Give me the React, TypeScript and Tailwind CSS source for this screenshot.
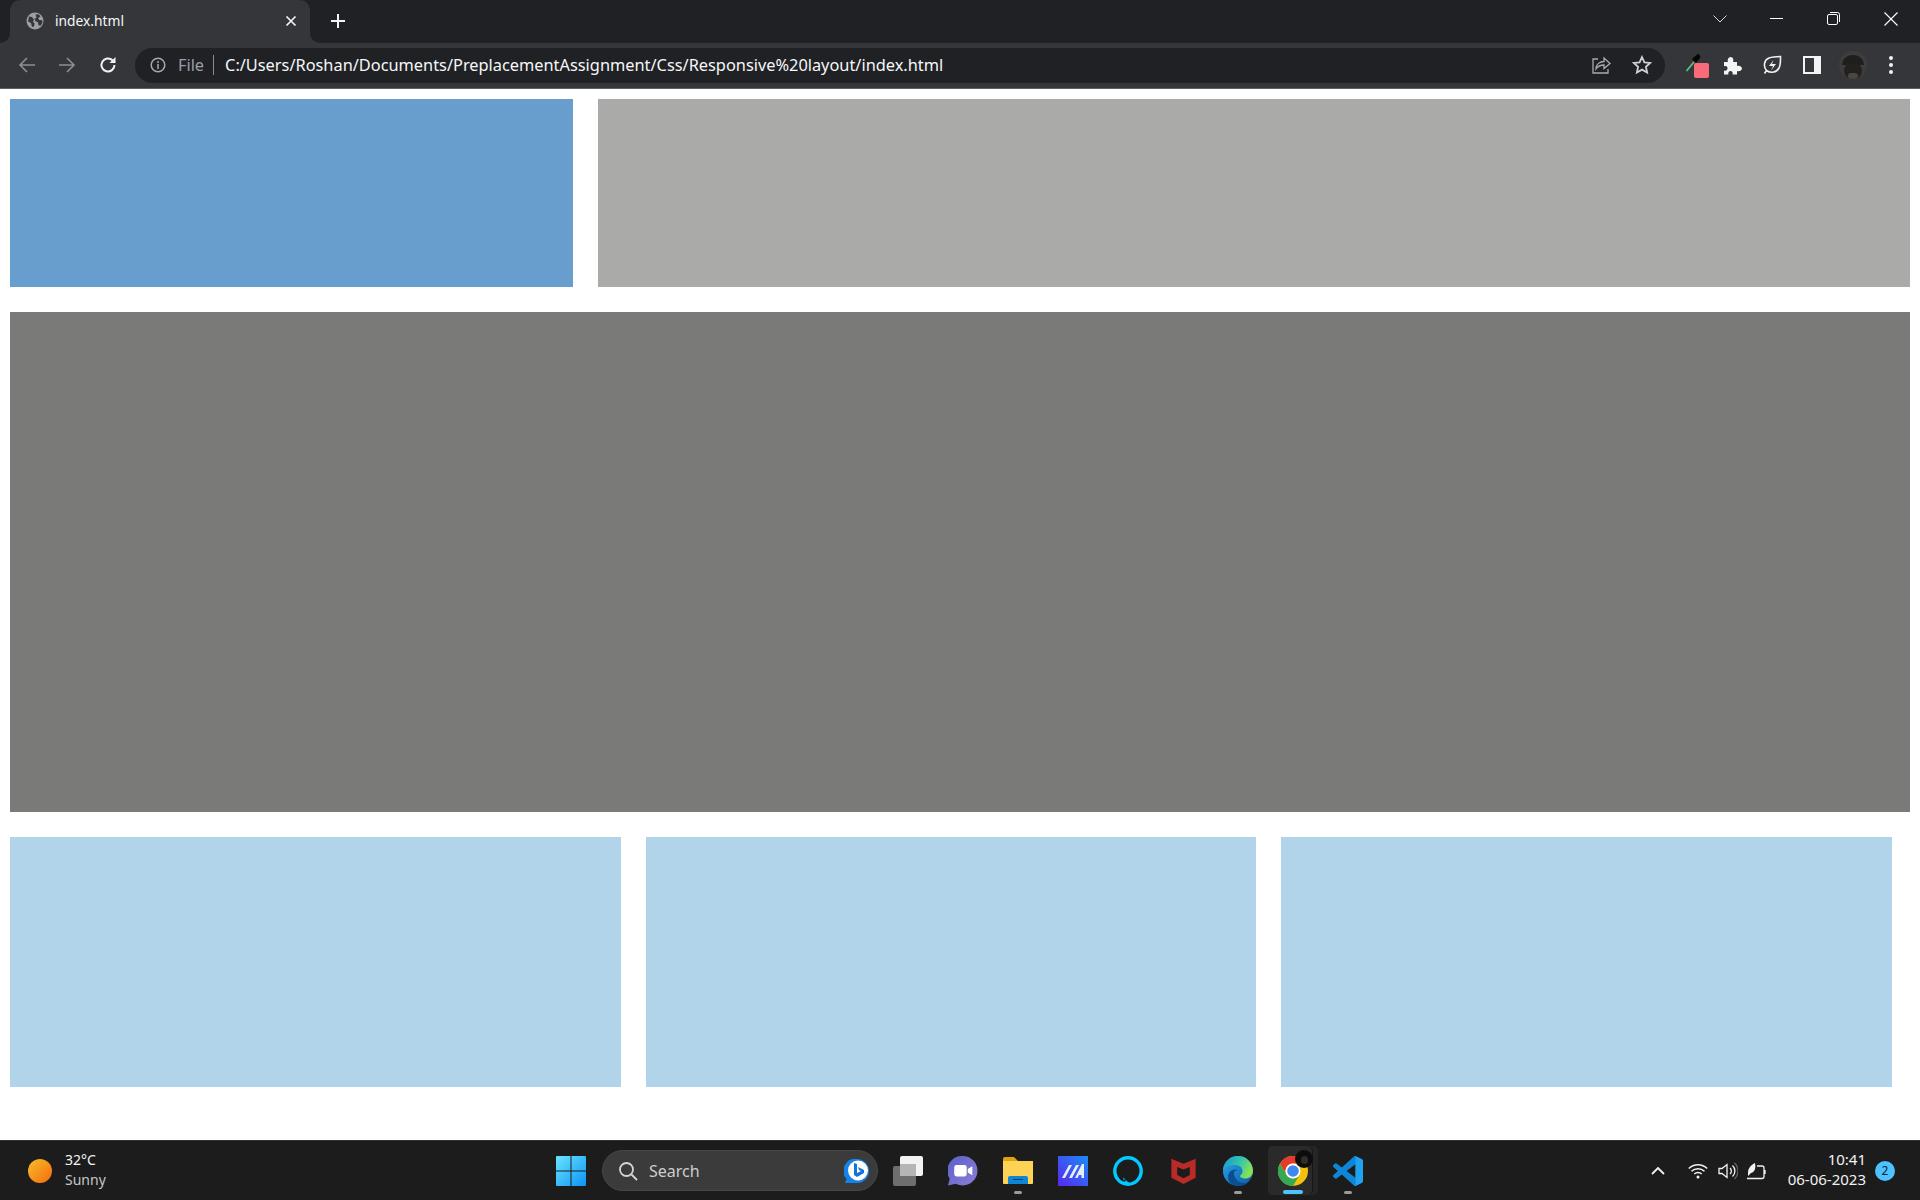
import React from "react";

const Ui = '"Noto Sans", "Open Sans", sans-serif';

function Arrow({ flip, color }: { flip?: boolean; color: string }) {
  return (
    <svg width="18" height="18" viewBox="0 0 18 18" fill="none" stroke={color} strokeWidth="1.6" style={{ transform: flip ? "scaleX(-1)" : undefined }}>
      <path d="M17 9H2M9 2L2 9l7 7" />
    </svg>
  );
}

function Chrome() {
  return (
    <div className="relative h-[43px] bg-[#202124] shrink-0 flex items-start">
      <div className="relative ml-[10px] mt-0 w-[300px] h-[43px] bg-[#35363a] rounded-t-[10px] flex items-center pb-[1px] pl-[16px] pr-[13px]">
        <div className="absolute left-[-10px] bottom-0 w-[10px] h-[10px] bg-[#35363a]">
          <div className="w-full h-full bg-[#202124] rounded-br-[10px]" />
        </div>
        <div className="absolute right-[-10px] bottom-0 w-[10px] h-[10px] bg-[#35363a]">
          <div className="w-full h-full bg-[#202124] rounded-bl-[10px]" />
        </div>
        <svg width="18" height="18" viewBox="0 0 18 18" className="shrink-0">
          <circle cx="9" cy="9" r="8.5" fill="#9aa0a6" />
          <path d="M3 4.500l3 .5 2 2.500-1 2 1.500 2-.5 3-2 .5-1-4-3-1.500zM9.500 2.500l3-.2 2 2-2.200 1.600.9 2 3 .4.3 2.500-2 3-2-.5-.5-3-2.500-1-1-2.500 2-1z" fill="#35363a" />
        </svg>
        <span className="ml-[11px] flex-1 text-[13.800px] leading-none text-[#f6f7f8]" style={{ fontFamily: Ui }}>index.html</span>
        <svg width="12" height="12" viewBox="0 0 12 12" stroke="#f1f3f4" strokeWidth="1.7" className="shrink-0">
          <path d="M1.500 1.500l9 9M10.500 1.500l-9 9" />
        </svg>
      </div>
      <svg width="16" height="16" viewBox="0 0 16 16" stroke="#f1f3f4" strokeWidth="2" className="ml-[20px] mt-[13px]">
        <path d="M8 1v14M1 8h14" />
      </svg>
      <div className="ml-auto flex items-center pr-[22px] pt-[7px] h-[30px]">
        <svg width="14" height="8" viewBox="0 0 14 8" fill="none" stroke="#d6d7d8" strokeWidth="1">
          <path d="M.5.5L7 7 13.500.5" />
        </svg>
        <div className="ml-[43px] w-[13px] h-px bg-white" />
        <svg width="13" height="13" viewBox="0 0 13 13" fill="none" stroke="#fff" strokeWidth="1" className="ml-[44px]">
          <rect x=".5" y="2.500" width="10" height="10" rx="1.500" />
          <path d="M3 .5h7.500a2 2 0 0 1 2 2V10" />
        </svg>
        <svg width="14" height="14" viewBox="0 0 14 14" stroke="#fff" strokeWidth="1.100" className="ml-[44px]">
          <path d="M.5.5l13 13M13.500.5l-13 13" />
        </svg>
      </div>
    </div>
  );
}

function Toolbar() {
  return (
    <div className="h-[46px] bg-[#35363a] border-b border-b-[#5f6064] shrink-0 flex items-center pb-[1px]">
      <div className="ml-[18px] flex items-center"><Arrow color="#8c8e92" /></div>
      <div className="ml-[22px] flex items-center"><Arrow flip color="#8c8e92" /></div>
      <svg width="18" height="18" viewBox="0 0 18 18" fill="none" stroke="#f1f3f4" strokeWidth="2" className="ml-[23px]">
        <path d="M15.500 9a6.500 6.500 0 1 1-2-4.700" />
        <path d="M16.500 1v6h-6z" fill="#f1f3f4" stroke="none" />
      </svg>
      <div className="ml-[18px] w-[1530px] h-[35px] rounded-full bg-[#202124] flex items-center pl-[15px]" style={{ fontFamily: Ui }}>
        <svg width="16" height="16" viewBox="0 0 16 16" fill="none" stroke="#a5a8ac" strokeWidth="1.500">
          <circle cx="8" cy="8" r="6.800" />
          <path d="M8 7v5M8 4v2" />
        </svg>
        <span className="ml-[12px] pt-[1px] text-[16.300px] text-[#9aa0a6] leading-none">File</span>
        <div className="ml-[9px] w-px h-[20px] bg-[#8a8c90]" />
        <span className="ml-[11px] pt-[1px] text-[16.350px] text-[#f6f7f8] leading-none whitespace-nowrap">C:/Users/Roshan/Documents/PreplacementAssignment/Css/Responsive%20layout/index.html</span>
        <svg width="20" height="20" viewBox="0 0 20 20" fill="none" stroke="#a9abae" strokeWidth="1.300" className="ml-auto">
          <path d="M7 4H2v14h15v-4M5 14c0-5 4-7.500 8-7.500V3l6 5.500-6 5V10c-3 0-6 1-8 4z" />
        </svg>
        <svg width="20" height="20" viewBox="0 0 20 20" fill="none" stroke="#d0d1d3" strokeWidth="1.800" className="ml-[21px] mr-[13px]">
          <path d="M10 2l2.400 5.300 5.800.6-4.300 3.900 1.200 5.700L10 14.600l-5.100 2.900 1.200-5.700L1.800 7.900l5.800-.6z" />
        </svg>
      </div>
      <div className="relative ml-[20px] w-[24px] h-[28px]">
        <svg width="18" height="20" viewBox="0 0 18 20" className="absolute left-0 top-[1px]">
          <path d="M1.500 19L9 10" stroke="#5ec27f" strokeWidth="1.800" />
          <path d="M7 7l4 4 2-2.500 2.500-3-2-4-3 2.500z" fill="#050505" />
        </svg>
        <div className="absolute left-[9px] top-[12px] w-[15px] h-[15px] rounded-[2px] bg-[#f96b7a]" />
      </div>
      <svg width="19" height="19" viewBox="0 0 19 19" fill="#f4f4f4" className="ml-[14px]">
        <path d="M1 6h4c-1-2 .5-5 2.700-5S11 4 10 6h4v4c2-1 5 .5 5 2.600S16 16 14 15v3.500H9.500c.8-1.800-.5-3.500-2-3.500s-2.800 1.700-2 3.500H1v-4c2 .8 3.500-.6 3.500-2.300S3 9.500 1 10.300z" />
      </svg>
      <svg width="20" height="20" viewBox="0 0 20 20" fill="none" stroke="#f0f0f0" strokeWidth="1.600" className="ml-[20px]">
        <path d="M2.500 18.500l2-3C1 11 2 5 7 3c4-1.500 8-1.500 11.500-1.500 0 4 .3 8-1.500 11.500-2.500 4.500-8 5.500-12.500 2.500" />
        <path d="M11.500 5L7 11h4l-2 4.500 5-6.500h-4z" fill="#f0f0f0" stroke="none" />
      </svg>
      <div className="ml-[21px] w-[18px] h-[18px] border-[2px] border-[#f1f3f4] bg-[#35363a] flex justify-end">
        <div className="w-[5px] h-full bg-[#f1f3f4]" />
      </div>
      <div className="relative ml-[18px] w-[28px] h-[28px] rounded-full bg-[#3f3d3c] overflow-hidden">
        <div className="absolute left-[3px] top-[4px] w-[22px] h-[10px] rounded-t-full bg-[#1f1e1e]" />
        <div className="absolute left-[5px] top-[12px] w-[18px] h-[16px] rounded-full bg-[#232120]" />
        <div className="absolute left-[9px] top-[22px] w-[10px] h-[6px] rounded-full bg-[#4a4643]" />
      </div>
      <div className="ml-[22px] flex flex-col gap-[3px]">
        <div className="w-[4px] h-[4px] rounded-full bg-[#f1f3f4]" />
        <div className="w-[4px] h-[4px] rounded-full bg-[#f1f3f4]" />
        <div className="w-[4px] h-[4px] rounded-full bg-[#f1f3f4]" />
      </div>
    </div>
  );
}

function Page() {
  return (
    <div className="flex-1 bg-white px-[10px] pt-[10px] flex flex-col gap-[25px] min-h-0">
      <div className="flex gap-[25px]">
        <div className="w-[563px] h-[188px] bg-[#679ecd]" />
        <div className="flex-1 h-[188px] bg-[#aaaaa8]" />
      </div>
      <div className="h-[500px] bg-[#7a7a78]" />
      <div className="flex gap-[25px]">
        <div className="w-[611px] h-[250px] bg-[#b1d4eb]" />
        <div className="w-[610px] h-[250px] bg-[#b1d4eb]" />
        <div className="w-[611px] h-[250px] bg-[#b1d4eb]" />
      </div>
    </div>
  );
}

function WinLogo() {
  return (
    <svg width="30" height="30" viewBox="0 0 30 30">
      <defs>
        <linearGradient id="w" x1="0" y1="0" x2="1" y2="1">
          <stop offset="0" stopColor="#6be4ff" />
          <stop offset="1" stopColor="#0a94f5" />
        </linearGradient>
      </defs>
      <path d="M1 0h13.500v14.500H0V1a1 1 0 0 1 1-1zM15.500 0H29a1 1 0 0 1 1 1v13.500H15.500zM0 15.500h14.500V30H1a1 1 0 0 1-1-1zM15.500 15.500H30V29a1 1 0 0 1-1 1H15.500z" fill="url(#w)" />
    </svg>
  );
}

function Bing() {
  return (
    <svg width="26" height="26" viewBox="0 0 26 26">
      <path d="M13 1a12 12 0 0 1 0 24H1l1.500-4A12 12 0 0 1 13 1z" fill="#1683e8" />
      <circle cx="14" cy="12.500" r="10" fill="#fff" />
      <path d="M10 5l3 1v9l4-2-2-1-1-3 6 3v3l-7 4-3-2z" fill="#1274d8" />
    </svg>
  );
}

function TaskView() {
  return (
    <div className="relative w-[30px] h-[30px]">
      <div className="absolute right-0 top-0 w-[23px] h-[20px] rounded-[2px] bg-[#f2f2f2]" />
      <div className="absolute left-0 bottom-0 w-[23px] h-[20px] rounded-[2px] bg-[#6e6e6e]" />
      <div className="absolute left-[7px] top-[8px] w-[16px] h-[12px] bg-[#b5b5b5]" />
    </div>
  );
}

function Teams() {
  return (
    <svg width="30" height="30" viewBox="2 2 26.500 26.500">
      <defs>
        <linearGradient id="t" x1="0" y1="0" x2="1" y2="1">
          <stop offset="0" stopColor="#5b5fc7" />
          <stop offset="1" stopColor="#8d7ed8" />
        </linearGradient>
      </defs>
      <path d="M15 2a13 13 0 0 1 0 26c-2 0-4-.5-6-1.500L2 28l1.500-6A13 13 0 0 1 15 2z" fill="url(#t)" />
      <rect x="7.500" y="10" width="11" height="10" rx="2" fill="#fff" />
      <path d="M19.500 13.500l4-2.500v8l-4-2.500z" fill="#fff" />
    </svg>
  );
}

function Folder() {
  return (
    <svg width="30" height="28" viewBox="0 0 30 28">
      <path d="M0 2a2 2 0 0 1 2-2h9l4 4h-15z" fill="#e0a30c" />
      <path d="M0 4h30v22a1 1 0 0 1-1 1H1a1 1 0 0 1-1-1z" fill="#fcd354" />
      <path d="M5 21a2 2 0 0 1 2-2h16a2 2 0 0 1 2 2v6H5z" fill="#0e86d4" />
      <path d="M10 22.500h10" stroke="#043f6e" strokeWidth="1" />
    </svg>
  );
}

function Maya() {
  return (
    <svg width="30" height="30" viewBox="0 0 30 30">
      <defs>
        <linearGradient id="m" x1="0" y1="1" x2="1" y2="0">
          <stop offset="0" stopColor="#5a27f2" />
          <stop offset="1" stopColor="#1a8cf5" />
        </linearGradient>
      </defs>
      <rect width="30" height="30" fill="url(#m)" />
      <path d="M4 22L11 9h3L7 22zM11 22L18 9h3L14 22z" fill="#e6eefc" />
      <path d="M17 22l7-14h2v14h-2.500v-3h-2.500l-1.500 3z" fill="#e6eefc" />
    </svg>
  );
}

function Alexa() {
  return (
    <svg width="30" height="30" viewBox="0 0 30 30" fill="none">
      <circle cx="15" cy="15" r="13.200" stroke="#00caff" strokeWidth="3.400" />
      <path d="M10 21.500L11 29l7-.5-3-2.500z" fill="#00caff" />
      <path d="M8 23l5 1-1 2z" fill="#1c1c1c" />
    </svg>
  );
}

function McAfee() {
  return (
    <svg width="27" height="27" viewBox="0 0 27 30">
      <path d="M0 2l13.500 5.500L27 2v21l-13.500 7L0 23z" fill="#b92b27" />
      <path d="M6.500 11l7 2.800 7-2.800v9l-7 3.600-7-3.600z" fill="#1c1c1c" />
    </svg>
  );
}

function Edge() {
  return (
    <svg width="30" height="30" viewBox="0 0 30 30">
      <defs>
        <linearGradient id="e1" x1="0" y1="0" x2="1" y2="1">
          <stop offset="0" stopColor="#2aa8e8" />
          <stop offset="1" stopColor="#0c59a4" />
        </linearGradient>
        <linearGradient id="e2" x1="0" y1="0" x2="1" y2="0.4">
          <stop offset="0" stopColor="#1593d8" />
          <stop offset="0.6" stopColor="#36c7a8" />
          <stop offset="1" stopColor="#86e05a" />
        </linearGradient>
      </defs>
      <circle cx="15" cy="15" r="15" fill="url(#e1)" />
      <path d="M15 0a15 15 0 0 1 15 15c0 5-4 7.500-8 7.500-3 0-5-1-5-2.500 0-1 2.500-1.500 2.500-5 0-4-4-6-7.500-6C7 9 2 11 0 15 0 6 7 0 15 0z" fill="url(#e2)" />
      <path d="M11 17c0 6 5 10 10 10 2 0 3.500-.5 5-1.500-3 3-7 4.500-11 4.500C9 30 5 26 5 21c0-4 3-7.500 7.500-7.500 1 0 2 .2 2.500.5-2.500.5-4 1-4 3z" fill="#0b4f92" />
    </svg>
  );
}

function ChromeLogo() {
  return (
    <svg width="30" height="30" viewBox="0 0 30 30">
      <circle cx="15" cy="15" r="15" fill="#f4c20d" />
      <path d="M2 7.500L8.500 18.750A7.500 7.500 0 0 0 21.500 18.750L15 30A15 15 0 0 1 2 7.500z" fill="#34a853" />
      <path d="M2 7.500A15 15 0 0 1 28 7.500H15A7.500 7.500 0 0 0 8.500 18.750z" fill="#e33b2e" />
      <circle cx="15" cy="15" r="7.500" fill="#fff" />
      <circle cx="15" cy="15" r="5.800" fill="#3f87f0" />
    </svg>
  );
}

function VSCode() {
  return (
    <svg width="30" height="30" viewBox="0 0 24 24">
      <path d="M23.150 2.587L18.210.21a1.494 1.494 0 0 0-1.705.29l-9.460 8.630-4.120-3.128a.999.999 0 0 0-1.276.057L.327 7.261A1 1 0 0 0 .326 8.740L3.899 12 .326 15.260a1 1 0 0 0 .001 1.479L1.650 17.940a.999.999 0 0 0 1.276.057l4.120-3.128 9.460 8.630a1.492 1.492 0 0 0 1.704.29l4.942-2.377A1.500 1.500 0 0 0 24 20.060V3.939a1.500 1.500 0 0 0-.85-1.352zm-5.146 14.861L10.826 12l7.178-5.448v10.896z" fill="#0d86d8" />
      <path d="M18.004 0V6.552 17.448 24l5.146-2.590A1.500 1.500 0 0 0 24 20.060V3.939a1.500 1.500 0 0 0-.85-1.352L18.210.21z" fill="#1fa3ef" />
    </svg>
  );
}

function Running({ children, dot }: { children: React.ReactNode; dot?: boolean }) {
  return (
    <div className="relative w-[30px] h-[30px] flex items-center justify-center">
      {children}
      {dot && <div className="absolute left-[11px] top-[35px] w-[8px] h-[3px] rounded-full bg-[#9a9a9a]" />}
    </div>
  );
}

function Taskbar() {
  return (
    <div className="h-[60px] shrink-0 bg-[#1c1c1c] border-t border-t-[#333333] flex items-center relative" style={{ fontFamily: Ui }}>
      <div className="ml-[28px] w-[24px] h-[24px] rounded-full bg-gradient-to-br from-[#f3bd2a] to-[#f4680c]" />
      <div className="ml-[13px] w-[491px] flex flex-col gap-[3px] pb-[2px] text-[14px] leading-[17px]">
        <span className="text-[#f5f5f5]">32°C</span>
        <span className="text-[#c6c6c6]">Sunny</span>
      </div>
      <WinLogo />
      <div className="ml-[16px] w-[276px] h-[41px] rounded-full bg-[#3b3b3b] border border-[#474747] flex items-center pl-[15px] pr-[7px]">
        <svg width="20" height="20" viewBox="0 0 20 20" fill="none" stroke="#d4d4d4" strokeWidth="1.800">
          <circle cx="8.500" cy="8.500" r="6.500" />
          <path d="M13.500 13.500L19 19" />
        </svg>
        <span className="ml-[11px] flex-1 text-[16px] text-[#cdcdcd] leading-none">Search</span>
        <Bing />
      </div>
      <div className="ml-[15px]"><TaskView /></div>
      <div className="ml-[25px]"><Teams /></div>
      <div className="ml-[25px]"><Running dot><Folder /></Running></div>
      <div className="ml-[25px]"><Maya /></div>
      <div className="ml-[25px]"><Alexa /></div>
      <div className="ml-[25px]"><Running><McAfee /></Running></div>
      <div className="ml-[25px]"><Running dot><Edge /></Running></div>
      <div className="relative ml-[25px] w-[30px] h-[30px] flex items-center justify-center">
        <div className="absolute left-[-10px] top-[-10px] w-[50px] h-[49px] rounded-[5px] bg-[#262626]" />
        <div className="absolute left-[-10px] top-[-10px] w-[45px] h-[49px] rounded-[5px] bg-[#2a2a2a] border-r border-r-[#161616]" />
        <div className="relative"><ChromeLogo /></div>
        <div className="absolute left-[17px] top-[-6px] w-[18px] h-[18px] rounded-full bg-[#0d0d0d]" />
        <div className="absolute left-[23px] top-[0px] w-[7px] h-[8px] rounded-full bg-[#2e2e2e]" />
        <div className="absolute left-[5px] top-[34px] w-[20px] h-[4px] rounded-full bg-[#4cc2ff]" />
      </div>
      <div className="ml-[25px]"><Running dot><VSCode /></Running></div>

      <svg width="14" height="9" viewBox="0 0 14 9" fill="none" stroke="#f2f2f2" strokeWidth="1.800" className="ml-[288px]">
        <path d="M1 8l6-6 6 6" />
      </svg>
      <svg width="20" height="16" viewBox="0 0 20 16" fill="none" stroke="#f2f2f2" strokeWidth="1.500" className="ml-[23px]">
        <path d="M.8 5.500a13 13 0 0 1 18.400 0M3.500 8.300a9.300 9.300 0 0 1 13 0M6.300 11a5.300 5.300 0 0 1 7.400 0" />
        <circle cx="10" cy="14" r="1.500" fill="#f2f2f2" stroke="none" />
      </svg>
      <svg width="20" height="18" viewBox="0 0 20 18" fill="none" stroke="#f2f2f2" strokeWidth="1.300" className="ml-[10px]">
        <path d="M1 6.500h3L9 2.500v13l-5-4H1zM12 6a4 4 0 0 1 0 6M14.500 3.500a7.500 7.500 0 0 1 0 11" />
        <path d="M16.500 1a11 11 0 0 1 0 16" stroke="#666" />
      </svg>
      <svg width="21" height="18" viewBox="0 0 21 18" fill="none" stroke="#f2f2f2" strokeWidth="1.300" className="ml-[8px]">
        <path d="M1 16.500h15a2 2 0 0 0 2-2V6a2 2 0 0 0-2-2h-5M19 8v4" />
        <path d="M2 11C2 6 5 3 9 1c1 5 0 9-4 10l-3 3z" fill="#f2f2f2" stroke="none" />
      </svg>
      <div className="w-[99px] flex flex-col items-end gap-[3px] pb-[2px] text-[15px] leading-[17px] text-[#f2f2f2] whitespace-nowrap">
        <span>10:41</span>
        <span>06-06-2023</span>
      </div>
      <div className="ml-[9px] w-[20px] h-[20px] rounded-full bg-[#4cc2ff] text-[#10202a] text-[12px] leading-none flex items-center justify-center">2</div>
    </div>
  );
}

export default function App() {
  return (
    <div className="w-[1920px] h-[1200px] flex flex-col overflow-hidden bg-white">
      <Chrome />
      <Toolbar />
      <Page />
      <Taskbar />
    </div>
  );
}
